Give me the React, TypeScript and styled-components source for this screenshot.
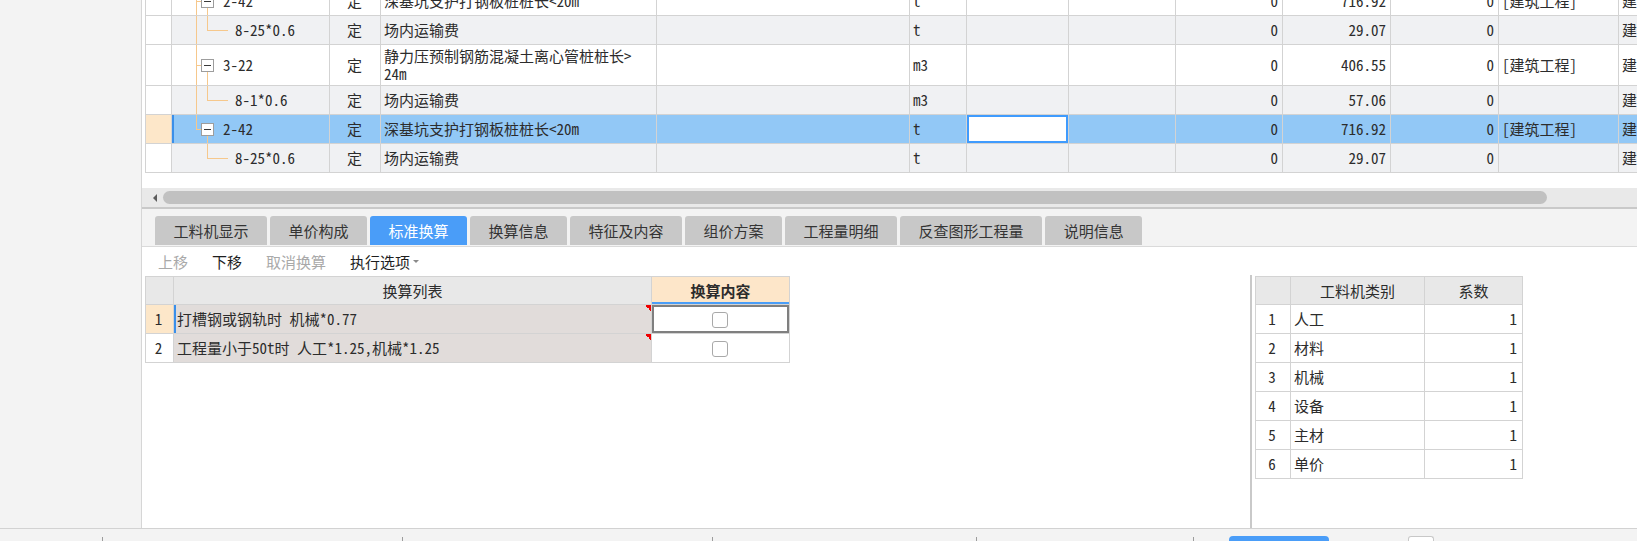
import React from "react";
import styled, { createGlobalStyle } from "styled-components";

const GRID_FONT = `"Noto Sans Mono CJK SC", "Noto Sans CJK SC", sans-serif`;
const UI_FONT = `"Noto Sans CJK SC", "Noto Sans", sans-serif`;
const TREE_LINE = "#f6c88c";
const GRID_LINE = "#d3d3d3";

const GlobalStyle = createGlobalStyle`
  * { box-sizing: border-box; }
  html, body { margin: 0; padding: 0; background: #fff; overflow: hidden; }
  body { width: 1637px; height: 541px; }
  td, th { box-sizing: content-box; }
`;

type Kind = "parent" | "child";
type Trunk = "full" | "half" | "none";

interface QuotaRow {
  kind: Kind;
  code: string;
  name: string;
  unit: string;
  price: string;
  tag: string;
  trunk: Trunk;
  tall?: boolean;
  selected?: boolean;
}

const quotaRows: QuotaRow[] = [
  { kind: "parent", code: "2-42", name: "深基坑支护打钢板桩桩长<20m", unit: "t", price: "716.92", tag: "[建筑工程]", trunk: "full" },
  { kind: "child", code: "8-25*0.6", name: "场内运输费", unit: "t", price: "29.07", tag: "", trunk: "full" },
  { kind: "parent", code: "3-22", name: "静力压预制钢筋混凝土离心管桩桩长>\n24m", unit: "m3", price: "406.55", tag: "[建筑工程]", trunk: "full", tall: true },
  { kind: "child", code: "8-1*0.6", name: "场内运输费", unit: "m3", price: "57.06", tag: "", trunk: "full" },
  { kind: "parent", code: "2-42", name: "深基坑支护打钢板桩桩长<20m", unit: "t", price: "716.92", tag: "[建筑工程]", trunk: "half", selected: true },
  { kind: "child", code: "8-25*0.6", name: "场内运输费", unit: "t", price: "29.07", tag: "", trunk: "none" },
];

const gridCols = [26, 158, 51, 276, 253, 57, 102, 107, 107, 108, 108, 120, 120];

const tabs = ["工料机显示", "单价构成", "标准换算", "换算信息", "特征及内容", "组价方案", "工程量明细", "反查图形工程量", "说明信息"];

const rules = [
  { no: "1", text: "打槽钢或钢轨时 机械*0.77", current: true },
  { no: "2", text: "工程量小于50t时 人工*1.25,机械*1.25", current: false },
];

const factors = ["人工", "材料", "机械", "设备", "主材", "单价"];

const statusSlots = [103, 300, 310, 264, 217];

// tree guide lines drawn as background layers of the tree cell
function treeLines(kind: Kind, trunk: Trunk) {
  const g = `linear-gradient(${TREE_LINE}, ${TREE_LINE})`;
  const layers: string[] = [];
  if (trunk === "full") layers.push(`${g} 24px 0 / 1px 100% no-repeat`);
  if (trunk === "half") layers.push(`${g} 24px 0 / 1px 50% no-repeat`);
  if (kind === "parent") {
    layers.push(`${g} 24px 50% / 6px 1px no-repeat`);
    layers.push(`${g} 35px 100% / 1px 50% no-repeat`);
  } else {
    layers.push(`${g} 35px 0 / 1px 50% no-repeat`);
    layers.push(`${g} 35px 50% / 21px 1px no-repeat`);
  }
  return layers.join(", ");
}

function App() {
  return (
    <Page>
      <GlobalStyle />
      <Main>
        <SidePanel />
        <Workspace>
          <GridViewport>
            <Grid>
              <colgroup>
                {gridCols.map((w, i) => (
                  <col key={i} style={{ width: w }} />
                ))}
              </colgroup>
              <tbody>
                {quotaRows.map((r, i) => {
                  const bg = r.selected ? "#92c8f6" : r.kind === "child" ? "#f0f1f3" : "#fff";
                  return (
                    <tr key={i}>
                      <Cell $h={r.tall ? 40 : 28} $bg={r.selected ? "#fde7c9" : "#fff"} />
                      <TreeCell $bg={bg} $lines={treeLines(r.kind, r.trunk)} $focus={r.selected}>
                        <TreeContent $indent={r.kind === "parent" ? 29 : 63}>
                          {r.kind === "parent" && <ExpandBox />}
                          {r.code}
                        </TreeContent>
                      </TreeCell>
                      <Cell $bg={bg} $align="center">定</Cell>
                      <Cell $bg={bg}>{r.name}</Cell>
                      <Cell $bg={bg} />
                      <Cell $bg={bg}>{r.unit}</Cell>
                      <Cell $bg={r.selected ? "#fff" : bg} $editing={r.selected} />
                      <Cell $bg={bg} />
                      <Cell $bg={bg} $align="right">0</Cell>
                      <Cell $bg={bg} $align="right">{r.price}</Cell>
                      <Cell $bg={bg} $align="right">0</Cell>
                      <Cell $bg={bg}>{r.tag}</Cell>
                      <Cell $bg={bg}>建筑工程</Cell>
                    </tr>
                  );
                })}
              </tbody>
            </Grid>
          </GridViewport>

          <HScroll>
            <ScrollArrow />
            <ScrollThumb />
          </HScroll>

          <TabStrip>
            {tabs.map((t) => (
              <Tab key={t} $active={t === "标准换算"}>
                {t}
              </Tab>
            ))}
          </TabStrip>

          <Toolbar>
            <ToolButton $disabled>上移</ToolButton>
            <ToolButton>下移</ToolButton>
            <ToolButton $disabled>取消换算</ToolButton>
            <ToolButton>
              执行选项
              <Caret />
            </ToolButton>
          </Toolbar>

          <LowerArea>
            <RulePanel>
              <Sheet $width={644}>
                <colgroup>
                  <col style={{ width: 28 }} />
                  <col style={{ width: 478 }} />
                  <col style={{ width: 138 }} />
                </colgroup>
                <thead>
                  <tr>
                    <HeadCell />
                    <HeadCell>换算列表</HeadCell>
                    <HeadCell $accent>换算内容</HeadCell>
                  </tr>
                </thead>
                <tbody>
                  {rules.map((r) => (
                    <tr key={r.no}>
                      <SheetCell $align="center" $bg={r.current ? "#fde7c9" : "#fff"}>
                        {r.no}
                      </SheetCell>
                      <SheetCell $bg="#e1dcda" $flag $focus={r.current}>
                        {r.text}
                      </SheetCell>
                      <SheetCell $align="center" $frame={r.current}>
                        <CheckBox />
                      </SheetCell>
                    </tr>
                  ))}
                </tbody>
              </Sheet>
            </RulePanel>

            <FactorPanel>
              <Sheet $width={267}>
                <colgroup>
                  <col style={{ width: 35 }} />
                  <col style={{ width: 134 }} />
                  <col style={{ width: 98 }} />
                </colgroup>
                <thead>
                  <tr>
                    <HeadCell />
                    <HeadCell>工料机类别</HeadCell>
                    <HeadCell>系数</HeadCell>
                  </tr>
                </thead>
                <tbody>
                  {factors.map((f, i) => (
                    <tr key={f}>
                      <SheetCell $align="center">{i + 1}</SheetCell>
                      <SheetCell>{f}</SheetCell>
                      <SheetCell $align="right">1</SheetCell>
                    </tr>
                  ))}
                </tbody>
              </Sheet>
            </FactorPanel>
          </LowerArea>
        </Workspace>
      </Main>

      <StatusBar>
        {statusSlots.map((w, i) => (
          <StatusSlot key={i} $w={w} />
        ))}
        <StatusTab />
        <StatusBox />
      </StatusBar>
    </Page>
  );
}

const Page = styled.div`
  width: 1637px;
  height: 541px;
  display: flex;
  flex-direction: column;
  overflow: hidden;
  background: #fff;
`;

const Main = styled.div`
  height: 528px;
  display: flex;
`;

const SidePanel = styled.div`
  width: 142px;
  flex: none;
  background: #f3f3f3;
  border-right: 1px solid #d6d6d6;
`;

const Workspace = styled.div`
  flex: 1;
  min-width: 0;
  display: flex;
  flex-direction: column;
  overflow: hidden;
`;

const GridViewport = styled.div`
  height: 188px;
  flex: none;
  overflow: hidden;
  padding-left: 3px;
`;

const Grid = styled.table`
  border-collapse: collapse;
  table-layout: fixed;
  width: 1593px;
  margin-top: -14px;
  font-family: ${GRID_FONT};
  font-size: 15px;
  line-height: 18px;
  color: #2c2c2c;
`;

const Cell = styled.td<{ $bg?: string; $align?: "left" | "center" | "right"; $h?: number; $editing?: boolean }>`
  height: ${(p) => p.$h ?? 28}px;
  padding: 0 4px 0 3px;
  border: 1px solid ${GRID_LINE};
  background-color: ${(p) => p.$bg ?? "#fff"};
  text-align: ${(p) => p.$align ?? "left"};
  vertical-align: middle;
  white-space: pre-line;
  overflow: hidden;
  box-shadow: ${(p) => (p.$editing ? "inset 0 0 0 2px #3f9bfd" : "none")};
`;

const TreeCell = styled(Cell)<{ $lines: string; $focus?: boolean }>`
  padding: 0;
  background: ${(p) => p.$lines};
  background-color: ${(p) => p.$bg ?? "#fff"};
  box-shadow: ${(p) => (p.$focus ? "inset 2px 0 0 #3a8fe9" : "none")};
`;

const TreeContent = styled.div<{ $indent: number }>`
  display: flex;
  align-items: center;
  padding-left: ${(p) => p.$indent}px;
  white-space: nowrap;
`;

const ExpandBox = styled.span`
  width: 13px;
  height: 13px;
  flex: none;
  margin-right: 9px;
  border: 1px solid #9d9d9d;
  background: linear-gradient(#3a3a3a, #3a3a3a) center / 7px 1px no-repeat, #fff;
`;

const HScroll = styled.div`
  height: 21px;
  flex: none;
  display: flex;
  align-items: center;
  padding-left: 11px;
  background: #e9e9e9;
  border-bottom: 2px solid #c9c9c9;
`;

const ScrollArrow = styled.span`
  width: 0;
  height: 0;
  border-top: 4px solid transparent;
  border-bottom: 4px solid transparent;
  border-right: 4px solid #5c5c5c;
`;

const ScrollThumb = styled.span`
  width: 1384px;
  height: 13px;
  margin-left: 6px;
  border-radius: 7px;
  background: #c1c1c1;
`;

const TabStrip = styled.div`
  height: 38px;
  flex: none;
  display: flex;
  align-items: flex-end;
  gap: 3px;
  padding: 0 0 1px 13px;
  background: #f3f3f3;
  border-bottom: 1px solid #dadada;
`;

const Tab = styled.div<{ $active?: boolean }>`
  height: 29px;
  padding: 0 18.5px;
  display: flex;
  align-items: center;
  border-radius: 3px 3px 0 0;
  background: ${(p) => (p.$active ? "#4a9df8" : "#c8c8c8")};
  color: ${(p) => (p.$active ? "#fff" : "#343434")};
  font-family: ${UI_FONT};
  font-size: 15px;
  white-space: nowrap;
`;

const Toolbar = styled.div`
  height: 28px;
  flex: none;
  display: flex;
  align-items: center;
  gap: 24px;
  padding-left: 16px;
  font-family: ${UI_FONT};
  font-size: 15px;
`;

const ToolButton = styled.span<{ $disabled?: boolean }>`
  display: flex;
  align-items: center;
  color: ${(p) => (p.$disabled ? "#a9a9a9" : "#1e1e1e")};
`;

const Caret = styled.span`
  width: 0;
  height: 0;
  margin-left: 3px;
  border-left: 3px solid transparent;
  border-right: 3px solid transparent;
  border-top: 3px solid #8a8a8a;
`;

const LowerArea = styled.div`
  flex: 1;
  min-height: 0;
  display: flex;
`;

const RulePanel = styled.div`
  width: 1110px;
  flex: none;
  padding: 1px 0 0 3px;
  border-right: 2px solid #c9c9c9;
`;

const FactorPanel = styled.div`
  flex: 1;
  padding: 1px 0 0 3px;
`;

const Sheet = styled.table<{ $width: number }>`
  border-collapse: collapse;
  table-layout: fixed;
  width: ${(p) => p.$width}px;
  font-family: ${GRID_FONT};
  font-size: 15px;
  line-height: 18px;
  color: #2c2c2c;
`;

const HeadCell = styled.th<{ $accent?: boolean }>`
  height: 27px;
  padding: 0;
  border: 1px solid ${GRID_LINE};
  background: ${(p) => (p.$accent ? "#fde6c9" : "#e8e8e8")};
  font-weight: ${(p) => (p.$accent ? 700 : 400)};
  text-align: center;
  box-shadow: ${(p) => (p.$accent ? "inset 0 -2px 0 #4a9ef8" : "none")};
`;

const SheetCell = styled.td<{
  $bg?: string;
  $align?: "left" | "center" | "right";
  $flag?: boolean;
  $focus?: boolean;
  $frame?: boolean;
}>`
  height: 28px;
  padding: 0 5px 0 3px;
  border: 1px solid ${GRID_LINE};
  text-align: ${(p) => p.$align ?? "left"};
  vertical-align: middle;
  white-space: nowrap;
  overflow: hidden;
  background: ${(p) =>
    p.$flag ? "linear-gradient(225deg, #f00000 50%, transparent 50%) right top / 6px 6px no-repeat," : ""}
    ${(p) => p.$bg ?? "#fff"};
  box-shadow: ${(p) =>
    p.$frame ? "inset 0 0 0 2px #7f7f7f" : p.$focus ? "inset 2px 0 0 #3a8fe9" : "none"};
`;

const CheckBox = styled.span`
  display: inline-block;
  width: 16px;
  height: 16px;
  vertical-align: middle;
  border: 1px solid #a9a9a9;
  border-radius: 3px;
  background: #fff;
`;

const StatusBar = styled.div`
  height: 13px;
  flex: none;
  display: flex;
  align-items: flex-end;
  background: #f3f3f3;
  border-top: 1px solid #d2d2d2;
`;

const StatusSlot = styled.div<{ $w: number }>`
  width: ${(p) => p.$w}px;
  height: 4px;
  flex: none;
  border-right: 1px solid #9c9c9c;
`;

const StatusTab = styled.div`
  width: 100px;
  height: 5px;
  margin-left: 35px;
  border-radius: 4px 4px 0 0;
  background: #4a9df8;
`;

const StatusBox = styled.div`
  width: 26px;
  height: 5px;
  margin-left: 79px;
  border: 1px solid #c8c8c8;
  border-bottom: none;
  border-radius: 3px 3px 0 0;
  background: #fff;
`;

export default App;
